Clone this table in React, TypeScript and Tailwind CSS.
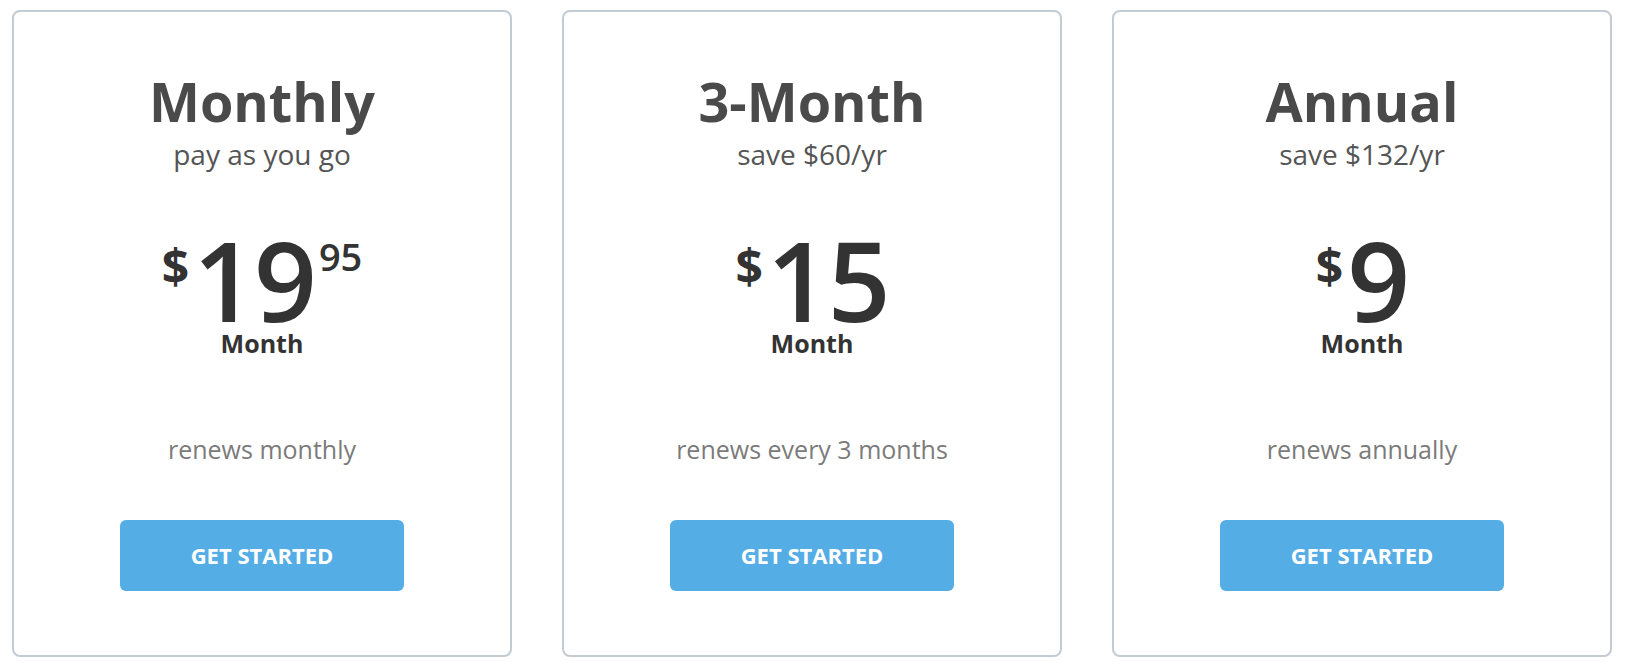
import React from 'react'

interface Plan {
  name: string
  tagline: string
  dollars: string
  cents?: string
  renews: string
}

const plans: Plan[] = [
  { name: 'Monthly', tagline: 'pay as you go', dollars: '19', cents: '95', renews: 'renews monthly' },
  { name: '3-Month', tagline: 'save $60/yr', dollars: '15', renews: 'renews every 3 months' },
  { name: 'Annual', tagline: 'save $132/yr', dollars: '9', renews: 'renews annually' },
]

function PlanCard({ plan }: { plan: Plan }) {
  return (
    <div className="flex h-[647px] flex-col items-center rounded-[8px] border-2 border-[#c3cbd5] bg-white pt-[62px]">
      <h2 className="text-[54px] font-bold leading-none text-[#4a4a4a]">{plan.name}</h2>
      <p className="mt-[12px] text-[28px] leading-none text-[#555555]">{plan.tagline}</p>

      <div className="mt-[56px] flex items-start text-[#333333]">
        <span className="mr-[4px] mt-[18px] text-[48px] font-bold leading-none">$</span>
        <span className="text-[110px] font-semibold leading-none tracking-[-2px]">{plan.dollars}</span>
        {plan.cents && (
          <span className="ml-[4px] mt-[13px] text-[38px] font-semibold leading-none">{plan.cents}</span>
        )}
      </div>
      <span className="-mt-[3px] text-[25px] font-bold leading-none text-[#333333]">Month</span>

      <p className="mt-[81px] text-[25px] leading-none text-[#7b7b7b]">{plan.renews}</p>

      <button className="mt-[58px] h-[71px] w-[284px] rounded-[6px] bg-[#55ade6] text-[22px] font-bold text-white">
        GET STARTED
      </button>
    </div>
  )
}

export default function App() {
  return (
    <div className="min-h-[672px] bg-white pl-[12px] pt-[10px] font-['Open_Sans',sans-serif]">
      <div className="grid w-[1600px] grid-cols-3 gap-[50px]">
        {plans.map((p) => (
          <PlanCard key={p.name} plan={p} />
        ))}
      </div>
    </div>
  )
}
